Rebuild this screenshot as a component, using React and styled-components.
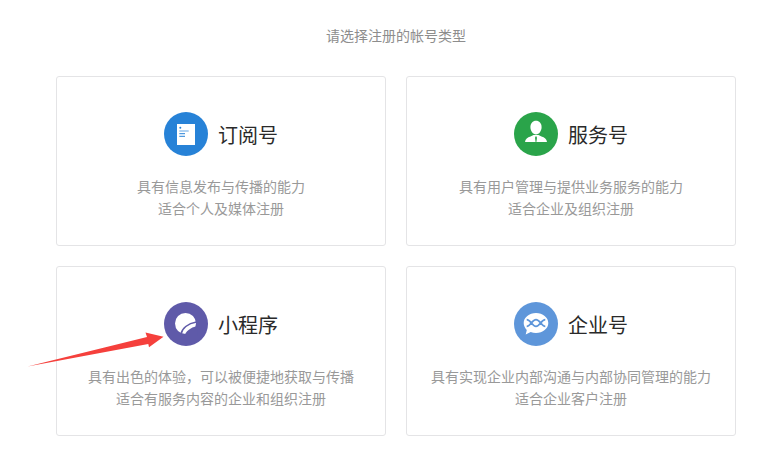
import React from 'react';
import styled, { createGlobalStyle } from 'styled-components';

const GlobalStyle = createGlobalStyle`
  html, body {
    margin: 0;
    padding: 0;
    background: #fff;
    font-family: "Noto Sans CJK SC", "Liberation Sans", sans-serif;
  }
`;

const Page = styled.div`
  position: relative;
  width: 780px;
  height: 475px;
  padding: 25px 44px 0 56px;
  box-sizing: border-box;
  overflow: hidden;
`;

const Heading = styled.div`
  height: 20px;
  margin-bottom: 31px;
  font-size: 14px;
  line-height: 20px;
  color: #8d8d8d;
  text-align: center;
`;

const Grid = styled.div`
  display: grid;
  grid-template-columns: 330px 330px;
  grid-auto-rows: 170px;
  gap: 20px;
`;

const Card = styled.div`
  padding-top: 35px;
  box-sizing: border-box;
  border: 1px solid #e4e4e6;
  border-radius: 3px;
  text-align: center;
`;

const CardHead = styled.div`
  display: flex;
  align-items: center;
  justify-content: center;
  gap: 10px;
  height: 44px;
  margin-bottom: 19px;
`;

const Name = styled.div`
  padding-top: 2px;
  font-size: 20px;
  line-height: 42px;
  color: #2a2a2a;
`;

const Desc = styled.div`
  font-size: 14px;
  line-height: 22px;
  color: #999;
`;

const Arrow = styled.svg`
  position: absolute;
  left: 0;
  top: 0;
  pointer-events: none;
`;

const DocIcon = () => (
  <svg width="44" height="44" viewBox="0 0 44 44">
    <circle cx="22" cy="22" r="22" fill="#2782d7" />
    <rect x="13" y="12" width="18" height="21" fill="#fff" />
    <circle cx="16.3" cy="15.7" r="1" fill="#2782d7" />
    <path d="M15.3 19h9.4" stroke="#7db5e8" strokeWidth="1.2" />
    <path d="M15.3 21.7h5.7M15.3 24.3h5.7" stroke="#2782d7" strokeWidth="1" />
  </svg>
);

const PersonIcon = () => (
  <svg width="44" height="44" viewBox="0 0 44 44">
    <circle cx="22" cy="22" r="22" fill="#2aa44a" />
    <path d="M22 8.700c3.200 0 5.600 2.600 5.600 6.300 0 3.800-2.500 7.500-5.600 7.500s-5.600-3.700-5.600-7.500c0-3.700 2.400-6.300 5.600-6.300z" fill="#fff" />
    <path d="M11 30c.3-3 2.500-4.600 5.500-5.500l3-1.500h5l3 1.500c3 .9 5.200 2.500 5.500 5.500z" fill="#fff" />
    <path d="M22 24l-1 1.500.6 4.500h.8l.6-4.500z" fill="#2aa44a" />
  </svg>
);

const LeafIcon = () => (
  <svg width="44" height="44" viewBox="0 0 44 44">
    <circle cx="22" cy="22" r="22" fill="#5f5aa9" />
    <circle cx="21.5" cy="21.500" r="10.500" fill="#fff" />
    <path d="M17 32c1-5.500 6.500-10.500 15.500-12" fill="none" stroke="#5f5aa9" strokeWidth="1.600" />
    <path d="M20.500 34c1-4.500 5.500-8.500 13-10v10z" fill="#5f5aa9" />
  </svg>
);

const ChatIcon = () => (
  <svg width="44" height="44" viewBox="0 0 44 44">
    <circle cx="22" cy="22" r="22" fill="#5e96da" />
    <path d="M22 11c6.800 0 12.300 4.500 12.300 10S28.800 31 22 31c-1.900 0-3.700-.3-5.300-.9l-5 2.400 1.100-4.600C11 26.200 9.700 23.700 9.700 21c0-5.500 5.500-10 12.300-10z" fill="#fff" />
    <path d="M12.700 17.700c4 0 5.300 6.600 9.300 6.600s5.300-6.600 9.300-6.600M12.700 24.300c4 0 5.300-6.600 9.300-6.600s5.300 6.600 9.300 6.600" fill="none" stroke="#5e96da" strokeWidth="1.800" />
  </svg>
);

const cards = [
  { name: '订阅号', Icon: DocIcon, lines: ['具有信息发布与传播的能力', '适合个人及媒体注册'] },
  { name: '服务号', Icon: PersonIcon, lines: ['具有用户管理与提供业务服务的能力', '适合企业及组织注册'] },
  { name: '小程序', Icon: LeafIcon, lines: ['具有出色的体验，可以被便捷地获取与传播', '适合有服务内容的企业和组织注册'] },
  { name: '企业号', Icon: ChatIcon, lines: ['具有实现企业内部沟通与内部协同管理的能力', '适合企业客户注册'] },
];

const App = () => (
  <Page>
    <GlobalStyle />
    <Heading>请选择注册的帐号类型</Heading>
    <Grid>
      {cards.map(({ name, Icon, lines }) => (
        <Card key={name}>
          <CardHead>
            <Icon />
            <Name>{name}</Name>
          </CardHead>
          {lines.map((line) => <Desc key={line}>{line}</Desc>)}
        </Card>
      ))}
    </Grid>
    <Arrow width="780" height="475" viewBox="0 0 780 475">
      <path d="M27.500 366.500L147 337 145.500 332.500 163.500 336.700 149 347.300 148.300 344z" fill="#f5403c" />
    </Arrow>
  </Page>
);

export default App;
